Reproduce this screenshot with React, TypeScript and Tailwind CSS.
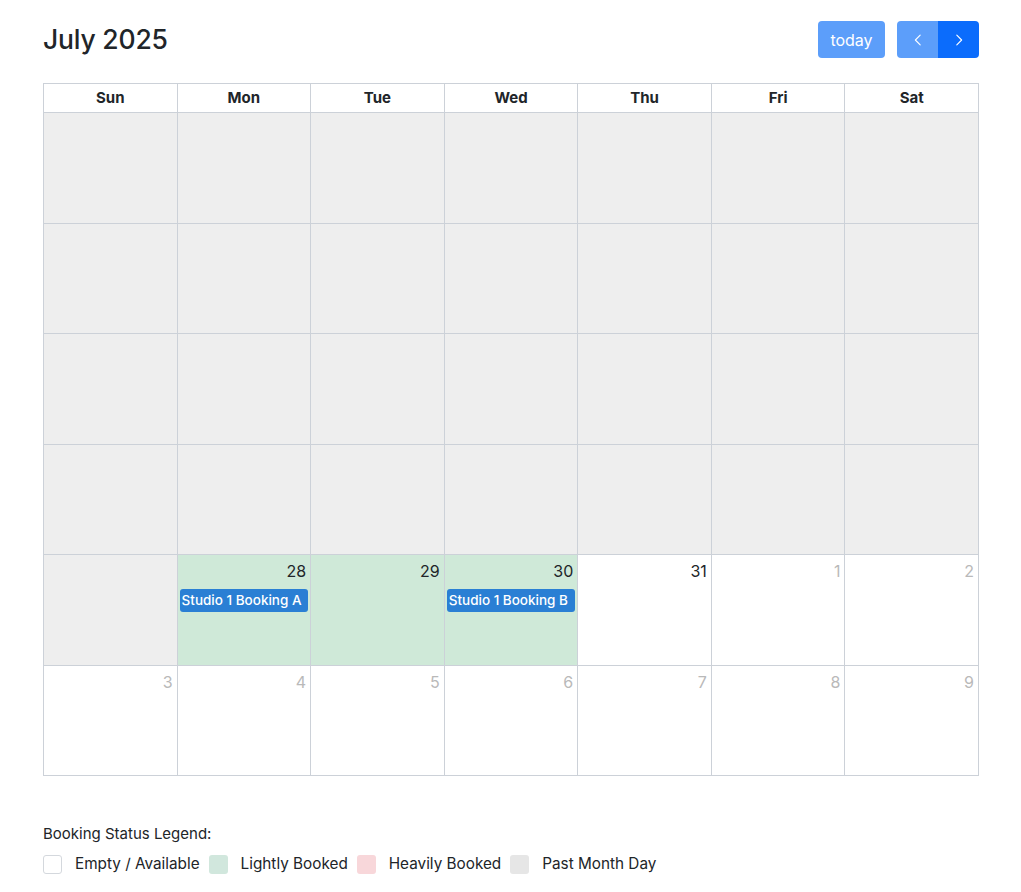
import React from "react";

type Cell = { day: number; cur: boolean; past: boolean; green?: boolean; event?: string };

const rows: Cell[][] = [];
for (let r = 0; r < 4; r++) {
  rows.push(Array.from({ length: 7 }, () => ({ day: 0, cur: false, past: true })));
}
rows.push([
  { day: 0, cur: false, past: true },
  { day: 28, cur: true, past: false, green: true, event: "Studio 1 Booking A" },
  { day: 29, cur: true, past: false, green: true },
  { day: 30, cur: true, past: false, green: true, event: "Studio 1 Booking B" },
  { day: 31, cur: true, past: false },
  { day: 1, cur: false, past: false },
  { day: 2, cur: false, past: false },
]);
rows.push([3, 4, 5, 6, 7, 8, 9].map((d) => ({ day: d, cur: false, past: false })));

const days = ["Sun", "Mon", "Tue", "Wed", "Thu", "Fri", "Sat"];

function Chevron({ dir }: { dir: "l" | "r" }) {
  return (
    <svg width="14" height="14" viewBox="0 0 16 16" fill="none" stroke="white" strokeWidth="1.3" strokeLinecap="round" strokeLinejoin="round">
      {dir === "l" ? <path d="M10.5 2.5 5 8l5.5 5.5" /> : <path d="M5.5 2.5 11 8l-5.5 5.5" />}
    </svg>
  );
}

export default function App() {
  return (
    <div className="min-h-[892px] bg-white pl-[43px] pr-[42px] pt-[21px] text-[#212529]" style={{ fontFamily: "Inter, 'Noto Sans', sans-serif" }}>
      <div className="flex h-[37px] items-center justify-between">
        <h2 className="text-[26.5px] font-medium leading-none tracking-[-0.2px]">July 2025</h2>
        <div className="flex items-center gap-3">
          <button className="h-[37px] w-[67px] rounded-[4px] bg-[#5c9efa] text-[16px] text-white">today</button>
          <div className="flex h-[37px] overflow-hidden rounded-[4px]">
            <button className="flex w-[41px] items-center justify-center bg-[#5c9efa]">
              <Chevron dir="l" />
            </button>
            <button className="flex w-[41px] items-center justify-center bg-[#0b6cfc]">
              <Chevron dir="r" />
            </button>
          </div>
        </div>
      </div>

      <div className="mt-[25px] border-l border-t border-[#ccd1d8]">
        <div className="grid grid-cols-7">
          {days.map((d) => (
            <div key={d} className="flex h-[29px] items-center justify-center border-b border-r border-[#ccd1d8] pt-[1px] text-[15px] font-bold">
              {d}
            </div>
          ))}
        </div>
        {rows.map((row, ri) => (
          <div key={ri} className="grid grid-cols-7">
            {row.map((c, ci) => (
              <div
                key={ci}
                className={
                  "h-[110.5px] border-b border-r border-[#ccd1d8] " +
                  (c.past ? "bg-[#eeeeee]" : c.green ? "bg-[#cfe9d8]" : "bg-white")
                }
              >
                {c.day > 0 && (
                  <div className={"px-[4px] pt-[4px] text-right text-[16px] leading-[24px] " + (c.cur ? "text-[#212529]" : "text-[#b9b9b9]")}>
                    {c.day}
                  </div>
                )}
                {c.event && (
                  <div className="mx-[2px] mt-[6px] rounded-[3px] bg-[#2a7fd4] px-[2px] text-[13.5px] font-medium leading-[23px] text-white">
                    {c.event}
                  </div>
                )}
              </div>
            ))}
          </div>
        ))}
      </div>

      <div className="mt-[47px] text-[15px] leading-[22px]">Booking Status Legend:</div>
      <div className="mt-[8px] flex items-center text-[15.3px]">
        {[
          { c: "bg-white border border-[#d4d8dd]", t: "Empty / Available" },
          { c: "bg-[#d1e7dd]", t: "Lightly Booked" },
          { c: "bg-[#f8d7da]", t: "Heavily Booked" },
          { c: "bg-[#e6e6e6]", t: "Past Month Day" },
        ].map((l) => (
          <div key={l.t} className="mr-[9px] flex items-center">
            <span className={"mr-[13px] inline-block h-[19px] w-[19px] rounded-[3px] " + l.c} />
            <span>{l.t}</span>
          </div>
        ))}
      </div>
    </div>
  );
}
